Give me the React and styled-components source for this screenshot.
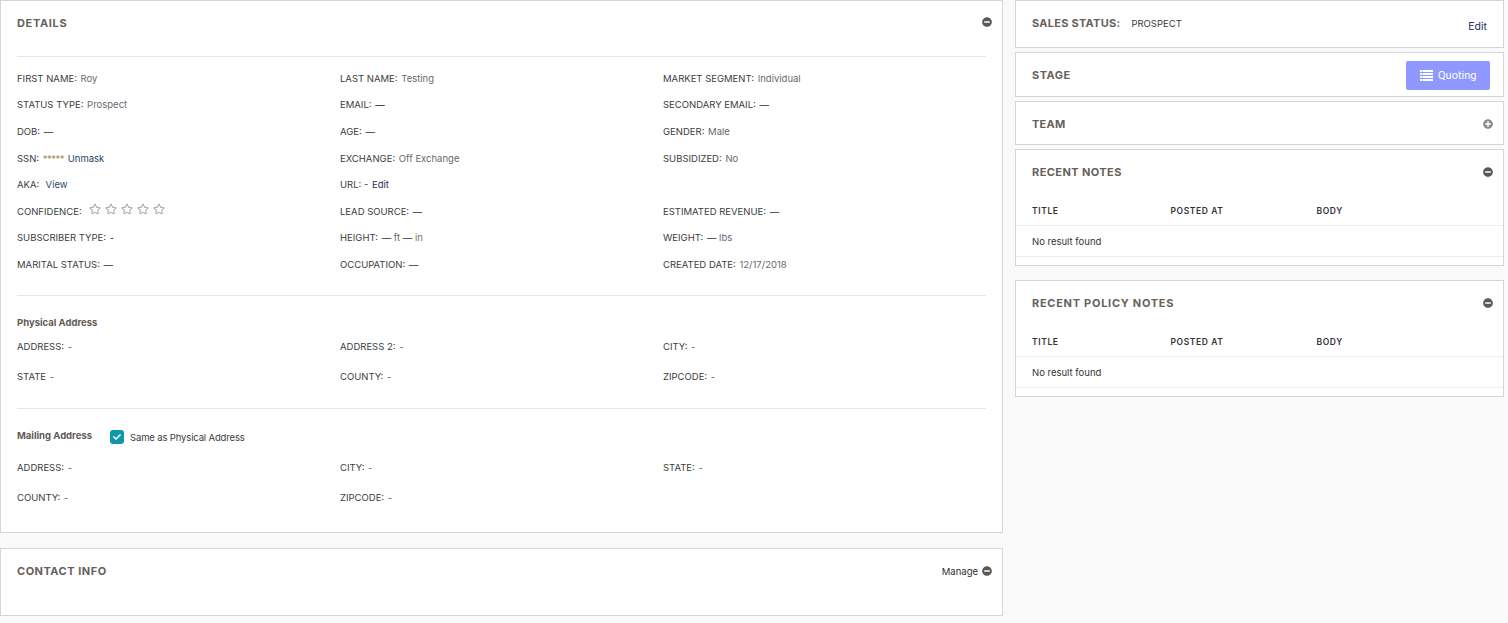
import React from 'react';
import styled, {createGlobalStyle} from 'styled-components';
import {FaRegStar, FaCheck, FaMinusCircle, FaPlusCircle} from 'react-icons/fa';

const GlobalStyle = createGlobalStyle`
  * { box-sizing: border-box; }
  html, body { margin: 0; background: #f9f9f9; }
  body { font-family: Inter, "Open Sans", sans-serif; color: #3a3a3a; }
`;

const Page = styled.div`
  display: grid;
  grid-template-columns: 1003px 489px;
  column-gap: 12px;
  align-items: start;
  height: 623px;
  overflow: hidden;
`;

const Column = styled.div`
  display: flex;
  flex-direction: column;
`;

const Card = styled.section`
  background: #fff;
  border: 1px solid #d6d6d6;
  height: ${p => p.$height}px;
  margin-bottom: ${p => p.$gap || 0}px;
  padding: 0 16px;
`;

const Head = styled.header`
  display: flex;
  align-items: center;
  justify-content: space-between;
  height: ${p => p.$height || 44}px;
`;

const Title = styled.h3`
  margin: 0;
  font-size: 11px;
  font-weight: 700;
  color: #66615b;
  letter-spacing: ${p => p.$track || 0.5}px;
`;

const Toggle = styled.span`
  display: flex;
  align-items: center;
  gap: 4px;
  margin-right: -6px;
  margin-top: ${p => p.$lift ? -2 : 0}px;
  font-size: 9.5px;
  color: #2f2f33;
  svg {
    font-size: 10px;
    color: ${p => (p.$muted ? '#8f8b87' : '#5c5855')};
  }
`;

const Rule = styled.hr`
  margin: ${p => p.$top || 0}px 0 0;
  border: 0;
  border-top: 1px solid #e6e6e6;
`;

const Fields = styled.div`
  display: grid;
  grid-template-columns: repeat(3, 323px);
  grid-auto-rows: ${p => p.$row}px;
  align-items: center;
  padding-top: ${p => p.$top || 0}px;
  padding-bottom: ${p => p.$bottom || 0}px;
`;

const Field = styled.div`
  display: flex;
  align-items: center;
  gap: 1px;
  font-size: 9.5px;
  white-space: pre;
  color: #3c3c40;
`;

const Value = styled.span`
  color: ${p => p.$color || '#68686f'};
`;

const Mask = styled.span`
  color: #a98a5a;
  letter-spacing: -0.5px;
  margin-right: 1px;
`;

const Stars = styled.span`
  display: flex;
  gap: 4px;
  margin-left: 6px;
  margin-top: -4px;
  color: #a3a9b0;
  font-size: 12px;
`;

const SubHead = styled.h4`
  margin: 0;
  font-size: 9.5px;
  font-weight: 700;
  color: #5f5b58;
`;

const SubHeadRow = styled.div`
  display: flex;
  align-items: center;
  gap: 18px;
  padding-top: ${p => p.$top}px;
  height: ${p => p.$height}px;
`;

const CheckLabel = styled.label`
  display: flex;
  align-items: center;
  gap: 6px;
  margin-top: 3px;
  font-size: 9.5px;
  letter-spacing: -0.15px;
  color: #3c3c40;
`;

const CheckBox = styled.span`
  display: flex;
  align-items: center;
  justify-content: center;
  width: 14px;
  height: 14px;
  background: #0e98a8;
  border-radius: 3px;
  color: #fff;
  font-size: 8px;
`;

const SalesRow = styled.div`
  display: flex;
  align-items: flex-start;
  gap: 11px;
  height: 100%;
  padding-top: 15px;
`;

const SalesValue = styled.span`
  font-size: 9.5px;
  color: #3a3a40;
  line-height: 15px;
`;

const EditLink = styled.a`
  margin-left: auto;
  margin-top: 4px;
  font-size: 10.5px;
  color: #232c5c;
`;

const StageButton = styled.button`
  display: flex;
  align-items: center;
  gap: 5px;
  height: 29px;
  width: 84px;
  margin-top: 1px;
  margin-right: -3px;
  padding: 0 0 0 14px;
  border: 0;
  border-radius: 2px;
  background: #8e98ff;
  color: #fff;
  font-family: Roboto, sans-serif;
  font-size: 11px;
`;

const NotesTable = styled.div`
  margin: 0 -16px;
`;

const NotesHead = styled.div`
  display: grid;
  grid-template-columns: 138.5px 146px 1fr;
  align-items: center;
  height: 32px;
  padding: 3px 16px 0;
  border-bottom: 1px solid #ececec;
  font-size: 8.5px;
  font-weight: 600;
  letter-spacing: 0.6px;
  color: #33333a;
`;

const NotesEmpty = styled.div`
  display: flex;
  align-items: center;
  height: 31px;
  padding: 0 16px;
  border-bottom: 1px solid #ececec;
  font-size: 9.5px;
  color: #333;
`;

const personal = [
  [['FIRST NAME:', 'Roy'], ['LAST NAME:', 'Testing'], ['MARKET SEGMENT:', 'Individual']],
  [['STATUS TYPE:', 'Prospect'], ['EMAIL:', '—', '#222'], ['SECONDARY EMAIL:', '—', '#333']],
  [['DOB:', '—', '#333'], ['AGE:', '—', '#333'], ['GENDER:', 'Male']],
];

const marital = [
  [['MARITAL STATUS:', '—', '#333'], ['OCCUPATION:', '—', '#333'], ['CREATED DATE:', '12/17/2018']],
];

const physical = [
  [['ADDRESS:', '-'], ['ADDRESS 2:', '-'], ['CITY:', '-']],
  [['STATE', '-'], ['COUNTY:', '-'], ['ZIPCODE:', '-']],
];

const mailing = [
  [['ADDRESS:', '-'], ['CITY:', '-'], ['STATE:', '-']],
  [['COUNTY:', '-'], ['ZIPCODE:', '-']],
];

function FieldCells({rows}) {
  return rows.flat().map(([label, value, color], i) => (
    <Field key={label + i}>{label} <Value $color={color}>{value}</Value></Field>
  ));
}

function ListIcon() {
  return (
    <svg width="13" height="11" viewBox="0 0 13 11" fill="#fff">
      <path d="M0 0h2.5v2H0zM3 0h10v2H3zM0 3h2.5v2H0zM3 3h10v2H3zM0 6h2.5v2H0zM3 6h10v2H3zM0 9h2.5v2H0zM3 9h10v2H3z" />
    </svg>
  );
}

function Notes({title, gap, track}) {
  return (
    <Card $height={117} $gap={gap}>
      <Head $height={44}>
        <Title $track={track}>{title}</Title>
        <Toggle><FaMinusCircle /></Toggle>
      </Head>
      <NotesTable>
        <NotesHead><span>TITLE</span><span>POSTED AT</span><span>BODY</span></NotesHead>
        <NotesEmpty>No result found</NotesEmpty>
      </NotesTable>
    </Card>
  );
}

export default function App() {
  return (
    <>
      <GlobalStyle />
      <Page>
        <Column>
          <Card $height={533} $gap={15}>
            <Head $height={44}>
              <Title $track={0.65}>DETAILS</Title>
              <Toggle $lift><FaMinusCircle /></Toggle>
            </Head>
            <Rule $top={11} />
            <Fields $row={26.6} $top={8} $bottom={17}>
              <FieldCells rows={personal} />
              <Field>SSN: <span><Mask>*****</Mask> <Value $color="#1f3f66">Unmask</Value></span></Field>
              <Field>EXCHANGE: <Value>Off Exchange</Value></Field>
              <Field>SUBSIDIZED: <Value>No</Value></Field>
              <Field>AKA:  <Value $color="#2b4a70">View</Value></Field>
              <Field>URL: - <Value $color="#1f2f55">Edit</Value></Field>
              <span />
              <Field>
                CONFIDENCE:
                <Stars><FaRegStar /><FaRegStar /><FaRegStar /><FaRegStar /><FaRegStar /></Stars>
              </Field>
              <Field>LEAD SOURCE: <Value $color="#333">—</Value></Field>
              <Field>ESTIMATED REVENUE: <Value $color="#333">—</Value></Field>
              <Field>SUBSCRIBER TYPE: <Value $color="#333">-</Value></Field>
              <Field>HEIGHT: <Value $color="#333">— <Value>ft</Value> — <Value $color="#8a6f4e">in</Value></Value></Field>
              <Field>WEIGHT: <Value $color="#333">— <Value>lbs</Value></Value></Field>
              <FieldCells rows={marital} />
            </Fields>
            <Rule />
            <SubHeadRow $top={18} $height={36}><SubHead>Physical Address</SubHead></SubHeadRow>
            <Fields $row={30} $bottom={16}>
              <FieldCells rows={physical} />
            </Fields>
            <Rule />
            <SubHeadRow $top={10} $height={44}>
              <SubHead>Mailing Address</SubHead>
              <CheckLabel><CheckBox><FaCheck /></CheckBox>Same as Physical Address</CheckLabel>
            </SubHeadRow>
            <Fields $row={30}>
              <FieldCells rows={mailing} />
            </Fields>
          </Card>
          <Card $height={68}>
            <Head $height={44}>
              <Title>CONTACT INFO</Title>
              <Toggle>Manage <FaMinusCircle /></Toggle>
            </Head>
          </Card>
        </Column>
        <Column>
          <Card $height={48} $gap={4}>
            <SalesRow>
              <Title $track={0.26}>SALES STATUS:</Title>
              <SalesValue>PROSPECT</SalesValue>
              <EditLink>Edit</EditLink>
            </SalesRow>
          </Card>
          <Card $height={45} $gap={4}>
            <Head $height={43}>
              <Title>STAGE</Title>
              <StageButton><ListIcon />Quoting</StageButton>
            </Head>
          </Card>
          <Card $height={44} $gap={4}>
            <Head $height={44}>
              <Title $track={0.25}>TEAM</Title>
              <Toggle $muted><FaPlusCircle /></Toggle>
            </Head>
          </Card>
          <Notes title="RECENT NOTES" track={0.42} gap={14} />
          <Notes title="RECENT POLICY NOTES" track={0.72} />
        </Column>
      </Page>
    </>
  );
}
